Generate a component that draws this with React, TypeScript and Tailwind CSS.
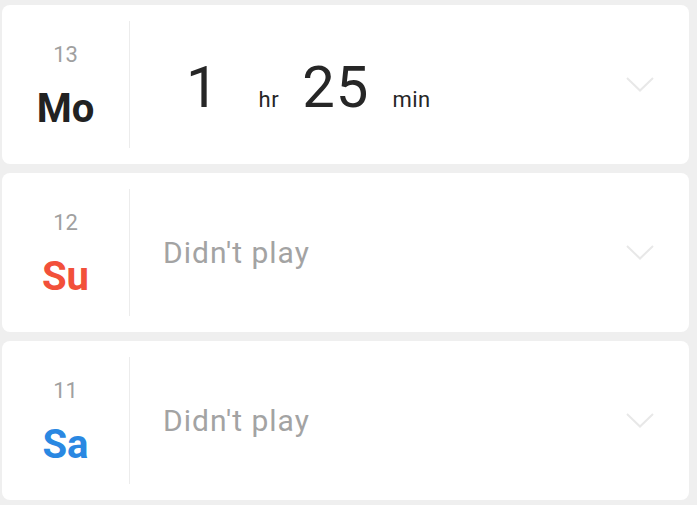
import React from "react";

function Chevron() {
  return (
    <svg width="28" height="15" viewBox="0 0 28 15" className="shrink-0">
      <polyline points="1,1 14,13.5 27,1" fill="none" stroke="#e8e8e8" strokeWidth="2" />
    </svg>
  );
}

type Row = { num: string; day: string; color: string; played: boolean };

const rows: Row[] = [
  { num: "13", day: "Mo", color: "text-[#222222]", played: true },
  { num: "12", day: "Su", color: "text-[#f2503a]", played: false },
  { num: "11", day: "Sa", color: "text-[#2a88e2]", played: false },
];

export default function App() {
  return (
    <div
      className="w-[697px] h-[505px] bg-[#efefef] pt-[5px] pl-[2px] pr-[8px] flex flex-col gap-[9px]"
      style={{ fontFamily: "Roboto, 'Noto Sans', sans-serif" }}
    >
      {rows.map((r) => (
        <div key={r.num} className="h-[159px] bg-white rounded-[8px] flex items-center">
          <div className="w-[127px] flex flex-col items-center gap-[23px] mt-[4px]">
            <div className="text-[22px] leading-none text-[#a0a0a0]">{r.num}</div>
            <div className={`text-[40px] leading-none font-bold ${r.color}`}>{r.day}</div>
          </div>
          <div className="w-px h-[127px] bg-[#ececec]" />
          <div className="flex-1 pl-[33px]">
            {r.played ? (
              <div className="flex items-baseline mt-[5px] ml-[23px] text-[#262626]">
                <span className="text-[58px] leading-none">1</span>
                <span className="text-[22px] leading-none ml-[40px] tracking-[0.5px]">hr</span>
                <span className="text-[58px] leading-none ml-[23px] tracking-[1px]">25</span>
                <span className="text-[22px] leading-none ml-[23px] tracking-[0.5px]">min</span>
              </div>
            ) : (
              <div className="text-[30px] leading-none tracking-[1px] text-[#a3a3a3]">Didn't play</div>
            )}
          </div>
          <div className="pr-[35px]">
            <Chevron />
          </div>
        </div>
      ))}
    </div>
  );
}
